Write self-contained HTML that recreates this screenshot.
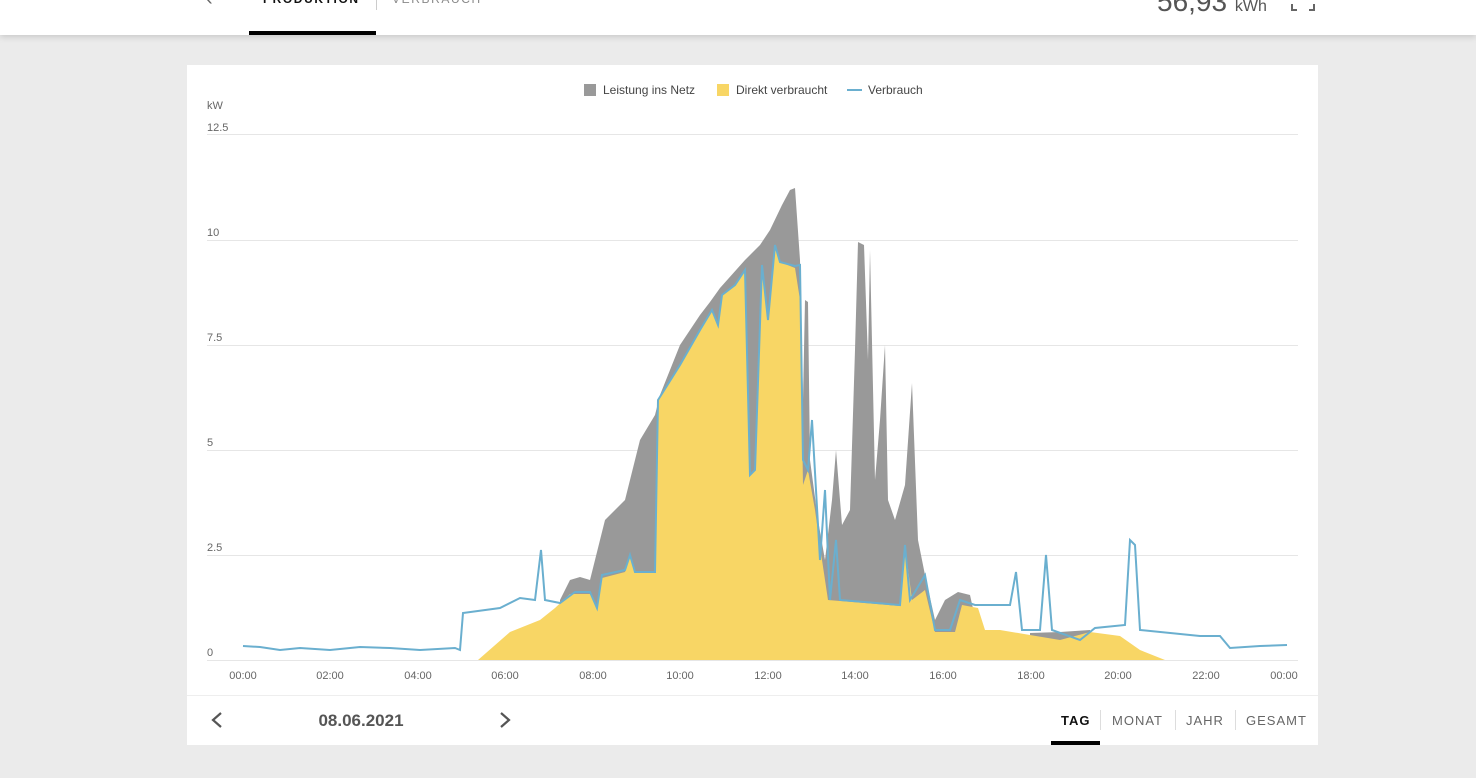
<!DOCTYPE html>
<html><head><meta charset="utf-8"><style>
body{margin:0;width:1476px;height:778px;background:#ebebeb;font-family:"Liberation Sans",Arial,sans-serif;overflow:hidden;position:relative}
.hdr{position:absolute;left:0;top:0;width:1476px;height:35px;background:#fff;box-shadow:0 2px 6px rgba(0,0,0,.15)}
.card{position:absolute;left:187px;top:65px;width:1131px;height:680px;background:#fff}
.t{position:absolute;white-space:nowrap}
</style></head><body>
<div class="hdr">
<div class="t" style="left:206px;top:-12px;font-size:20px;color:#666">‹</div>
<div class="t" style="left:263px;top:-8px;font-size:12px;font-weight:bold;letter-spacing:1.6px;color:#111">PRODUKTION</div>
<div style="position:absolute;left:376px;top:0;width:1px;height:10px;background:#ccc"></div>
<div class="t" style="left:392px;top:-8px;font-size:12px;letter-spacing:1.6px;color:#888">VERBRAUCH</div>
<div style="position:absolute;left:249px;top:31px;width:127px;height:4px;background:#000"></div>
<div class="t" style="left:1157px;top:-14px;font-size:28px;color:#555">56,93 <span style="font-size:16px">kWh</span></div>
<svg style="position:absolute;left:1290px;top:0" width="26" height="14"><path d="M2 4V10H7M24 4V10H19" stroke="#666" stroke-width="2" fill="none"/></svg>
</div>
<div class="card"></div>
<svg style="position:absolute;left:0;top:0" width="1476" height="778" font-family="Liberation Sans,Arial,sans-serif">
<rect x="584" y="84" width="12" height="12" fill="#999"/><text x="603" y="94" font-size="12" fill="#444">Leistung ins Netz</text>
<rect x="717" y="84" width="12" height="12" fill="#f8d665"/><text x="736" y="94" font-size="12" fill="#444">Direkt verbraucht</text>
<line x1="847" y1="90" x2="862" y2="90" stroke="#6aafcf" stroke-width="2"/><text x="868" y="94" font-size="12" fill="#444">Verbrauch</text>
<text x="207" y="109" font-size="11" fill="#666">kW</text>
<g font-size="11" fill="#666">
<text x="207" y="131">12.5</text><text x="207" y="236">10</text><text x="207" y="341">7.5</text><text x="207" y="446">5</text><text x="207" y="551">2.5</text><text x="207" y="656">0</text></g>
<g stroke="#e6e6e6" stroke-width="1">
<line x1="207" y1="134.5" x2="1298" y2="134.5"/><line x1="207" y1="240.5" x2="1298" y2="240.5"/><line x1="207" y1="345.5" x2="1298" y2="345.5"/><line x1="207" y1="450.5" x2="1298" y2="450.5"/><line x1="207" y1="555.5" x2="1298" y2="555.5"/><line x1="207" y1="660.5" x2="1298" y2="660.5"/>
<line x1="187" y1="695.5" x2="1318" y2="695.5" stroke="#eee"/>
</g>
<g font-size="11" fill="#666" text-anchor="middle">
<text x="243" y="679">00:00</text><text x="330" y="679">02:00</text><text x="418" y="679">04:00</text><text x="505" y="679">06:00</text><text x="593" y="679">08:00</text><text x="680" y="679">10:00</text><text x="768" y="679">12:00</text><text x="855" y="679">14:00</text><text x="943" y="679">16:00</text><text x="1031" y="679">18:00</text><text x="1118" y="679">20:00</text><text x="1206" y="679">22:00</text><text x="1284" y="679">00:00</text></g>
<path fill="#999" d="M560 660L560 600 570 580 580 577 590 580 605 520 625 500 640 440 655 415 660 395 680 345 700 315 710 302 720 288 745 260 760 245 770 230 782 205 790 190 795 188 800 260 803 400 805 300 808 302 810 460 818 520 825 560 832 500 836 450 842 525 850 510 855 350 858 242 864 245 868 360 870 250 875 480 880 420 885 345 888 500 895 520 905 485 912 383 918 540 925 575 935 620 945 600 958 592 970 595 980 640 980 660Z"/>
<path fill="#999" d="M1030 660L1030 633 1060 632 1090 630 1092 660Z"/>
<path fill="#f8d665" d="M478 660L510 632 540 620 555 608 570 594 590 594 597 608 602 578 625 572 630 556 635 573 655 572 658 400 680 365 700 330 712 310 718 325 722 295 735 285 745 270 750 475 755 470 762 265 768 320 775 245 780 262 795 268 800 300 803 485 808 470 815 510 822 560 828 600 900 606 905 545 912 600 925 590 935 632 955 632 962 605 978 608 985 630 1000 630 1030 635 1060 640 1090 632 1120 636 1140 650 1165 660Z"/>
<path fill="none" stroke="#6aafcf" stroke-width="2" d="M243 646L260 647 280 650 300 648 330 650 360 647 390 648 420 650 455 648 460 650 463 613 500 608 520 598 535 600 541 550 545 600 560 603 575 592 590 592 597 608 602 575 625 570 630 555 635 572 655 572 658 400 680 365 700 330 712 310 718 325 722 295 735 285 745 270 750 475 755 470 762 265 768 320 775 245 780 262 795 266 800 265 803 460 808 470 812 420 820 560 825 490 830 600 836 540 840 600 900 605 905 545 910 600 925 575 935 630 950 630 960 600 975 605 1010 605 1016 572 1022 630 1040 630 1046 555 1052 630 1080 640 1095 628 1125 625 1130 540 1135 545 1140 630 1200 636 1220 636 1230 648 1260 646 1287 645"/>
<path d="M221 713L213 720 221 727" stroke="#555" stroke-width="2.2" fill="none"/>
<path d="M501 713L509 720 501 727" stroke="#555" stroke-width="2.2" fill="none"/>
<text x="361" y="726" font-size="17" font-weight="bold" fill="#555" text-anchor="middle">08.06.2021</text>
<g font-size="13" letter-spacing="1">
<text x="1061" y="725" font-weight="bold" fill="#111">TAG</text>
<text x="1112" y="725" fill="#666">MONAT</text>
<text x="1186" y="725" fill="#666">JAHR</text>
<text x="1246" y="725" fill="#666">GESAMT</text></g>
<g stroke="#ddd"><line x1="1100.5" y1="710" x2="1100.5" y2="730"/><line x1="1175.5" y1="710" x2="1175.5" y2="730"/><line x1="1235.5" y1="710" x2="1235.5" y2="730"/></g>
<rect x="1051" y="741" width="49" height="4" fill="#000"/>
</svg>
</body></html>
